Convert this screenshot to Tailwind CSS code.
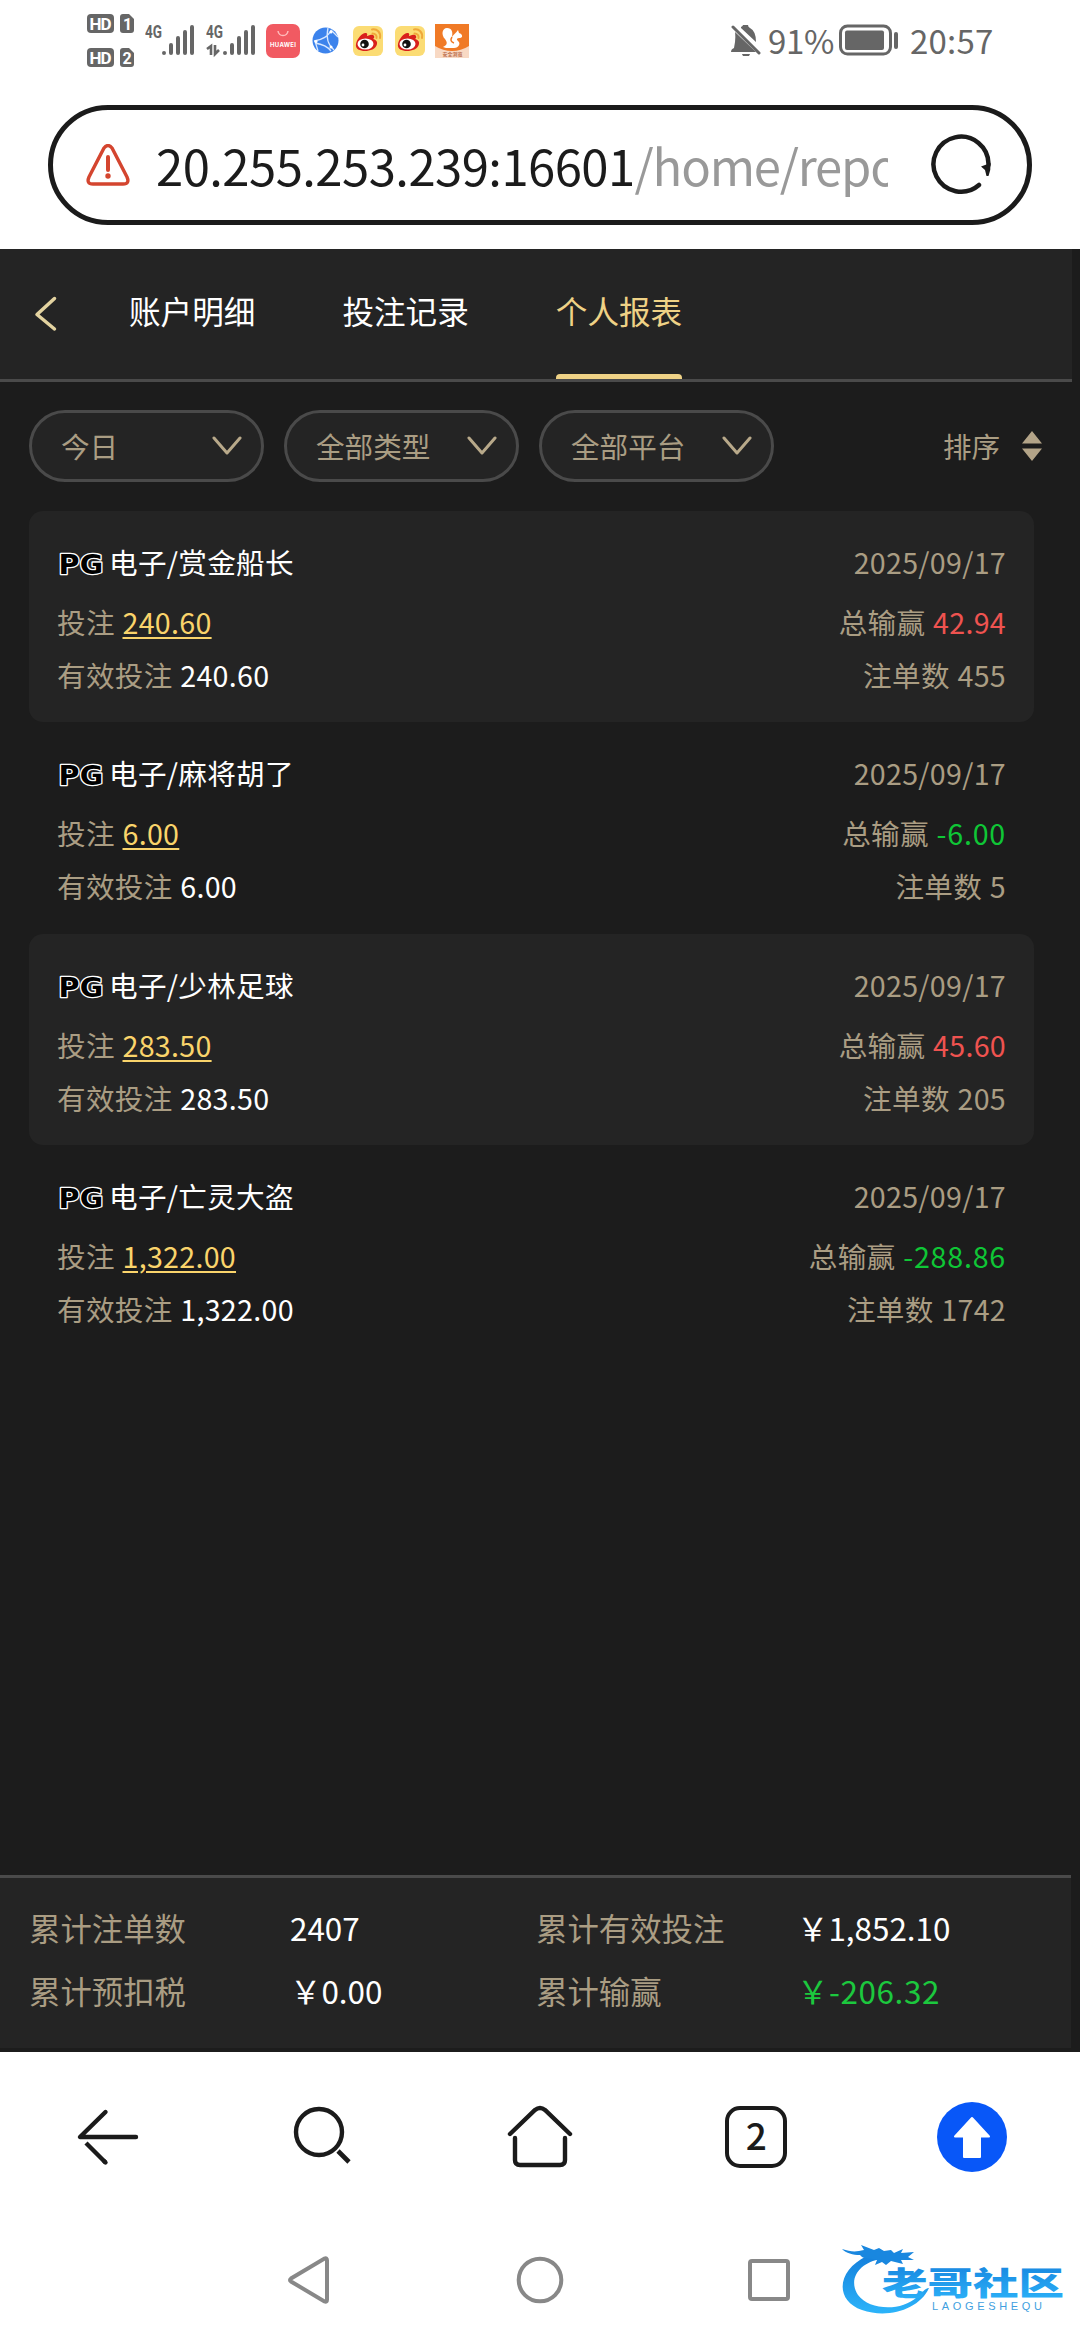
<!DOCTYPE html>
<html lang="zh-CN">

<head>
    <meta charset="UTF-8">
    <meta name="viewport" content="width=device-width, initial-scale=1.0">
    <script src="https://cdn.jsdelivr.net/npm/@tailwindcss/browser@4"></script>
    <title>个人报表</title>
</head>

<body class="bg-white font-['Noto_Sans_CJK_SC',sans-serif]">
    <!-- shared icons -->
    <svg class="hidden">
        <symbol id="pg" viewBox="0 0 48 26">
            <text x="1.500" y="23.500" textLength="45" lengthAdjust="spacingAndGlyphs" font-family="DejaVu Sans" font-weight="bold" font-size="27" fill="#000" stroke="#fff" stroke-width="2.6" stroke-linejoin="round" paint-order="stroke">PG</text>
        </symbol>
        <symbol id="down" viewBox="0 0 30 20">
            <path d="M2 2 15 17 28 2" fill="none" stroke="#b8a98a" stroke-width="3" stroke-linecap="round" stroke-linejoin="round" />
        </symbol>
        <symbol id="weibo" viewBox="0 0 30 30">
            <rect width="30" height="30" rx="6" fill="#fbdc74" />
            <path d="M3 18C4 12 10 6 13 7c2 0 1 3 1 3s6-3 7 0c1 2-1 3-1 3s5 1 4 5c-1 5-7 7-12 7S2 23 3 18Z" fill="#d9201c" />
            <ellipse cx="12.500" cy="18" rx="8" ry="5.500" fill="#fff" />
            <circle cx="11.500" cy="18" r="4.300" fill="#111" />
            <circle cx="10" cy="19" r="1.400" fill="#fff" />
            <path d="M19 3.500c5-1 9 3 8 8.500M19.500 7.500c3 0 4.500 2 4 4.500" fill="none" stroke="#efa83a" stroke-width="2" stroke-linecap="round" />
        </symbol>
    </svg>

    <div class="w-[1080px] h-[2340px] flex flex-col overflow-hidden">
        <!-- status bar -->
        <div class="h-[105px] shrink-0 flex items-start pl-[86px] text-[#666]">
            <svg class="w-[50px] h-[70px]" viewBox="0 0 50 70" font-family="Roboto" font-weight="bold" fill="#fff">
                <g fill="#666">
                    <rect x="1" y="14" width="27" height="19" rx="4" />
                    <path d="M37 14h6l5 5v11q0 3-3 3h-8q-3 0-3-3V17q0-3 3-3Z" />
                    <rect x="1" y="48" width="27" height="19" rx="4" />
                    <path d="M37 48h6l5 5v11q0 3-3 3h-8q-3 0-3-3V51q0-3 3-3Z" />
                </g>
                <text x="3.500" y="29.500" font-size="17" textLength="22">HD</text>
                <text x="37" y="29.500" font-size="16" textLength="8">1</text>
                <text x="3.500" y="63.500" font-size="17" textLength="22">HD</text>
                <text x="36.500" y="63.500" font-size="16" textLength="9">2</text>
            </svg>
            <svg class="w-[52px] h-[60px] ml-[9px]" viewBox="0 0 52 60" fill="#666">
                <text x="0" y="38" font-family="Roboto" font-weight="bold" font-size="18" textLength="17" lengthAdjust="spacingAndGlyphs">4G</text>
                <path d="M19 53v0M26 45v8M33 38v15M40 32v21M47 27v26" stroke="#666" stroke-width="4" stroke-linecap="round" />
            </svg>
            <svg class="w-[52px] h-[60px] ml-[9px]" viewBox="0 0 52 60" fill="#666">
                <text x="0" y="38" font-family="Roboto" font-weight="bold" font-size="18" textLength="17" lengthAdjust="spacingAndGlyphs">4G</text>
                <path d="M1 49l4-3v9M9 45v9l4-4" fill="none" stroke="#666" stroke-width="2.600" />
                <path d="M19 53v0M26 45v8M33 38v15M40 32v21M47 27v26" stroke="#666" stroke-width="4" stroke-linecap="round" />
            </svg>
            <svg class="w-[34px] h-[34px] mt-6 ml-[8px]" viewBox="0 0 34 34">
                <rect width="34" height="34" rx="7" fill="#f15a62" />
                <path d="M12 7c1 6 9 6 10 0" fill="none" stroke="#fbb" stroke-width="1.500" />
                <text x="4" y="22.500" font-family="Inter" font-weight="bold" font-size="6" textLength="26" fill="#fff">HUAWEI</text>
            </svg>
            <svg class="w-[27px] h-[27px] mt-[27px] ml-[12px]" viewBox="0 0 27 27">
                <circle cx="13.500" cy="13.500" r="13" fill="#3c83ec" />
                <path d="M2 14C10 13 17 9 19 3M16 1c-2 9 0 17 6 22M3 16c6 1 13 4 16 8M19 3l7 7M3 14l3 10" fill="none" stroke="#d8e8ff" stroke-width="1.300" />
                <circle cx="19" cy="5" r="1.500" fill="#fff" />
                <circle cx="4" cy="14.500" r="1.500" fill="#fff" />
                <circle cx="19" cy="20" r="1.500" fill="#fff" />
            </svg>
            <svg class="w-[30px] h-[30px] mt-[26px] ml-[14px]"><use href="#weibo" /></svg>
            <svg class="w-[30px] h-[30px] mt-[26px] ml-[12px]"><use href="#weibo" /></svg>
            <svg class="w-[34px] h-[34px] mt-6 ml-[10px]" viewBox="0 0 34 34">
                <rect width="34" height="34" fill="#f8d9c4" />
                <path d="M0 0h34v22q-8 5-17 5T0 22Z" fill="#f07a26" />
                <path d="M8 23c4-2 5-4 2-8C6 11 7 4 12 4c5 0 6 4 5 9 2-3 4-4 6-7l1 3c4 1 4 5 1 5-3 0-4 1-2 3 3 2 1 7-4 7H11Z" fill="#fff" />
                <path d="M17 13c-2 3-1 5 2 6" fill="none" stroke="#f07a26" stroke-width="1.500" />
                <text x="7.500" y="31.500" font-family="Noto Sans CJK SC" font-size="5" font-weight="bold" textLength="20" fill="#b86a48">安全浏览</text>
            </svg>

            <svg class="w-[30px] h-[32px] mt-6 ml-[262px]" viewBox="0 0 30 32" fill="#666">
                <path d="M4 8 25 28H0q0-3 3-4Q5 15 4 8ZM10 3q2-1 2-2h5q0 2 2 3 6 3 6 14L10 4ZM11 30h8q-1 3-4 3t-4-3Z" />
                <path d="M2 3 28 29" stroke="#666" stroke-width="3" stroke-linecap="round" />
            </svg>
            <span class="text-[33px] leading-[48px] mt-[16px] ml-[7px] w-[70px] tracking-[-0.3px]">91%</span>
            <svg class="w-[62px] h-[34px] mt-[23px] ml-[1px]" viewBox="0 0 62 34" fill="#666">
                <rect x="1.500" y="3" width="50" height="28" rx="7" fill="none" stroke="#666" stroke-width="3" />
                <rect x="6" y="7.500" width="39" height="19.500" rx="2" />
                <rect x="55" y="9" width="4" height="17" rx="2" />
            </svg>
            <span class="text-[33px] leading-[48px] mt-[16px] ml-[9px] tracking-[0.2px]">20:57</span>
        </div>

        <!-- address bar -->
        <div class="h-[144px] shrink-0 px-12">
            <div class="h-[120px] border-5 border-[#1b1b1b] rounded-full flex items-center pl-[33px] text-[#1b1b1b]">
                <svg class="w-[44px] h-[42px] shrink-0" viewBox="0 0 44 42">
                    <path d="M18 4q4-5 8 0L41 33q3 7-4 7H7q-7 0-4-7Z" fill="none" stroke="#d4452f" stroke-width="3.400" />
                    <path d="M22 13v13" stroke="#d4452f" stroke-width="4" stroke-linecap="round" />
                    <circle cx="22" cy="32" r="2.700" fill="#d4452f" />
                </svg>
                <div class="ml-[26px] w-[732px] shrink-0 overflow-hidden whitespace-nowrap text-[49px] leading-[72px] tracking-[-0.55px]">20.255.253.239:16601<span class="text-[#999] tracking-[-1.2px]">/home/repo</span></div>
                <svg class="w-[64px] h-[64px] ml-[41px] shrink-0" viewBox="0 0 64 64">
                    <path d="M50 52A27.500 27.500 0 1 1 59.500 32" fill="none" stroke="#1b1b1b" stroke-width="4.500" stroke-linecap="round" />
                    <path d="M52 33.500 61.500 30Q62 37 59.500 43L57.500 43 56 37Z" fill="#1b1b1b" />
                </svg>
            </div>
        </div>

        <!-- report page -->
        <div class="h-[1803px] shrink-0 bg-[#1c1c1c] flex flex-col text-[28.6px] text-[#aa9d83] whitespace-nowrap">
            <div class="w-[1072px] h-[133px] shrink-0 bg-[#242424] border-b-3 border-[#4a4a4a] flex text-[31.6px] text-white">
                <svg class="w-[24px] h-[38px] ml-[34px] mt-[46px] mr-[71px]" viewBox="0 0 24 38">
                    <path d="M20.500 3.500 3 19.500 20.500 34" fill="none" stroke="#e3d3a0" stroke-width="3.500" stroke-linecap="round" stroke-linejoin="round" />
                </svg>
                <div class="flex gap-[87px] leading-[122px]">
                    <span>账户明细</span>
                    <span>投注记录</span>
                    <div class="flex flex-col justify-between text-[#efd286]">
                        <span>个人报表</span>
                        <i class="h-[5px] rounded-t-[4px] bg-[#efd286]"></i>
                    </div>
                </div>
            </div>

            <div class="flex items-center mt-7 ml-[29px] h-[72px] shrink-0 leading-[64px]">
                <div class="w-[235px] h-[72px] mr-5 rounded-full border-3 border-[#4a4a4a] bg-[#242424] flex items-center justify-between pl-[29px] pr-[19px]">
                    今日<svg class="w-[30px] h-[20px]"><use href="#down" /></svg>
                </div>
                <div class="w-[235px] h-[72px] mr-5 rounded-full border-3 border-[#4a4a4a] bg-[#242424] flex items-center justify-between pl-[29px] pr-[19px]">
                    全部类型<svg class="w-[30px] h-[20px]"><use href="#down" /></svg>
                </div>
                <div class="w-[235px] h-[72px] rounded-full border-3 border-[#4a4a4a] bg-[#242424] flex items-center justify-between pl-[29px] pr-[19px]">
                    全部平台<svg class="w-[30px] h-[20px]"><use href="#down" /></svg>
                </div>
                <span class="ml-[169px]">排序</span>
                <svg class="w-[20px] h-[30px] ml-[22px]" viewBox="0 0 20 30" fill="#b3a488">
                    <path d="M10 0 20 12.500H0ZM0 17.500H20L10 30Z" />
                </svg>
            </div>

            <div class="mt-[29px] ml-[29px] w-[1005px] leading-[53px] tracking-[0.3px] [word-spacing:1px]">
                <div class="h-[211.3px] pt-6 pl-[28px] pr-[28px] rounded-[14px] bg-[#242424]">
                    <div class="flex items-center mb-[7px]">
                        <svg class="w-[48px] h-[26px] mt-[3px] mr-[4px]"><use href="#pg" /></svg>
                        <span class="text-white">电子/赏金船长</span>
                        <span class="ml-auto">2025/09/17</span>
                    </div>
                    <div class="flex justify-between">
                        <p>投注 <span class="text-[#fad46b] underline decoration-2 underline-offset-3">240.60</span></p>
                        <p>总输赢 <span class="text-[#ef5350]">42.94</span></p>
                    </div>
                    <div class="flex justify-between">
                        <p>有效投注 <span class="text-white">240.60</span></p>
                        <p>注单数 455</p>
                    </div>
                </div>
                <div class="h-[211.3px] pt-6 pl-[28px] pr-[28px]">
                    <div class="flex items-center mb-[7px]">
                        <svg class="w-[48px] h-[26px] mt-[3px] mr-[4px]"><use href="#pg" /></svg>
                        <span class="text-white">电子/麻将胡了</span>
                        <span class="ml-auto">2025/09/17</span>
                    </div>
                    <div class="flex justify-between">
                        <p>投注 <span class="text-[#fad46b] underline decoration-2 underline-offset-3">6.00</span></p>
                        <p>总输赢 <span class="text-[#0fc636] tracking-[0.8px]">-6.00</span></p>
                    </div>
                    <div class="flex justify-between">
                        <p>有效投注 <span class="text-white">6.00</span></p>
                        <p>注单数 5</p>
                    </div>
                </div>
                <div class="h-[211.3px] pt-6 pl-[28px] pr-[28px] rounded-[14px] bg-[#242424]">
                    <div class="flex items-center mb-[7px]">
                        <svg class="w-[48px] h-[26px] mt-[3px] mr-[4px]"><use href="#pg" /></svg>
                        <span class="text-white">电子/少林足球</span>
                        <span class="ml-auto">2025/09/17</span>
                    </div>
                    <div class="flex justify-between">
                        <p>投注 <span class="text-[#fad46b] underline decoration-2 underline-offset-3">283.50</span></p>
                        <p>总输赢 <span class="text-[#ef5350]">45.60</span></p>
                    </div>
                    <div class="flex justify-between">
                        <p>有效投注 <span class="text-white">283.50</span></p>
                        <p>注单数 205</p>
                    </div>
                </div>
                <div class="h-[211.3px] pt-6 pl-[28px] pr-[28px]">
                    <div class="flex items-center mb-[7px]">
                        <svg class="w-[48px] h-[26px] mt-[3px] mr-[4px]"><use href="#pg" /></svg>
                        <span class="text-white">电子/亡灵大盗</span>
                        <span class="ml-auto">2025/09/17</span>
                    </div>
                    <div class="flex justify-between">
                        <p>投注 <span class="text-[#fad46b] underline decoration-2 underline-offset-3">1,322.00</span></p>
                        <p>总输赢 <span class="text-[#0fc636] tracking-[0.8px]">-288.86</span></p>
                    </div>
                    <div class="flex justify-between">
                        <p>有效投注 <span class="text-white">1,322.00</span></p>
                        <p>注单数 1742</p>
                    </div>
                </div>
            </div>

            <!-- totals -->
            <div class="mt-auto mb-[4px] w-[1071px] h-[173px] bg-[#242424] border-t-3 border-[#4a4a4a] pt-[18px] pl-[29px] grid grid-cols-[261px_246px_261px_auto] auto-rows-[63px] leading-[63px] text-[31.4px]">
                <span>累计注单数</span>
                <span class="text-white">2407</span>
                <span>累计有效投注</span>
                <span class="text-white">￥1,852.10</span>
                <span>累计预扣税</span>
                <span class="text-white">￥0.00</span>
                <span>累计输赢</span>
                <span class="text-[#1cc83e] tracking-[0.6px]">￥-206.32</span>
            </div>
        </div>

        <!-- browser toolbar -->
        <div class="h-[170px] shrink-0 flex items-center justify-between pl-[76px] pr-[73px] text-[#1b1b1b]">
            <svg class="w-[64px] h-[64px]" viewBox="0 0 64 64" fill="none" stroke="#1b1b1b" stroke-width="4.400" stroke-linecap="round" stroke-linejoin="round">
                <path d="M29.500 7 4 32H60" />
                <path d="M10 38 29.500 57.500" stroke-linecap="butt" />
                <path d="M28 56 29.500 57.500" />
            </svg>
            <svg class="w-[64px] h-[64px] ml-[2px]" viewBox="0 0 64 64" fill="none" stroke="#1b1b1b" stroke-width="4.400">
                <circle cx="27" cy="27" r="23" />
                <path d="M46 46 57 57" stroke-width="4.600" />
            </svg>
            <svg class="w-[68px] h-[64px] mr-[2px]" viewBox="0 0 68 64" fill="none" stroke="#1b1b1b" stroke-width="4.400" stroke-linecap="round">
                <path d="M4 29 29 5q5-4 10 0L64 29" />
                <path d="M9 33V55q0 5 5 5H54q5 0 5-5V33" />
            </svg>
            <div class="w-[62px] h-[62px] rounded-[15px] border-4 border-[#1b1b1b] text-[37px] leading-[49px] text-center font-medium">2</div>
            <svg class="w-[70px] h-[70px]" viewBox="0 0 70 70">
                <circle cx="35" cy="35" r="35" fill="#0857f8" />
                <path d="M35 16 52 34.500H43V55H27V34.500H18Z" fill="#fff" stroke="#fff" stroke-width="2" stroke-linejoin="round" />
            </svg>
        </div>

        <!-- system navigation -->
        <div class="h-[118px] shrink-0 flex items-start pl-[287px]">
            <svg class="w-[44px] h-[50px] mt-[33px]" viewBox="0 0 44 50">
                <path d="M37.500 3.500q2.500-1 2.500 2V44.500q0 3-2.500 2L4 26.500q-2-1.500 0-3Z" fill="none" stroke="#888" stroke-width="4" />
            </svg>
            <svg class="w-[48px] h-[48px] mt-[34px] ml-[185px]" viewBox="0 0 48 48">
                <circle cx="24" cy="24" r="21.300" fill="none" stroke="#888" stroke-width="4" />
            </svg>
            <div class="w-[42px] h-[42px] mt-[37px] ml-[184px] rounded-[4px] border-4 border-[#888]"></div>
            <svg class="w-[238px] h-[90px] mt-[20px] ml-[49px]" viewBox="0 0 238 90">
                <defs>
                    <linearGradient id="sea" x1="0" y1="0" x2="0" y2="1">
                        <stop offset="0" stop-color="#1580dc" />
                        <stop offset="1" stop-color="#2cb4fa" />
                    </linearGradient>
                </defs>
                <path d="M28 14C-2 28-5 58 23 68C48 77 80 68 90 46C86 46 82 52 78 55C62 70 30 68 19 53C8 36 22 20 42 17Z" fill="url(#sea)" />
                <path d="M3 7c9 3 14 3 22 1l-3-5 13 5 5-2 5 3 7-1 3 3 9-4-2 4 13-1-6 5 6 3-13 0 2 4-12-3-5 4-4-3-7 3 2-5C28 15 25 18 21 13c-7 0-14-2-18-6Z" fill="#1987df" />
                <text x="43" y="53" textLength="182" lengthAdjust="spacingAndGlyphs" font-family="Noto Sans CJK SC" font-weight="900" font-size="32" fill="url(#sea)">老哥社区</text>
                <text x="93" y="68" textLength="110" font-family="Liberation Sans" font-size="11" fill="#3f9fe0">LAOGESHEQU</text>
            </svg>
        </div>
    </div>
</body>

</html>
